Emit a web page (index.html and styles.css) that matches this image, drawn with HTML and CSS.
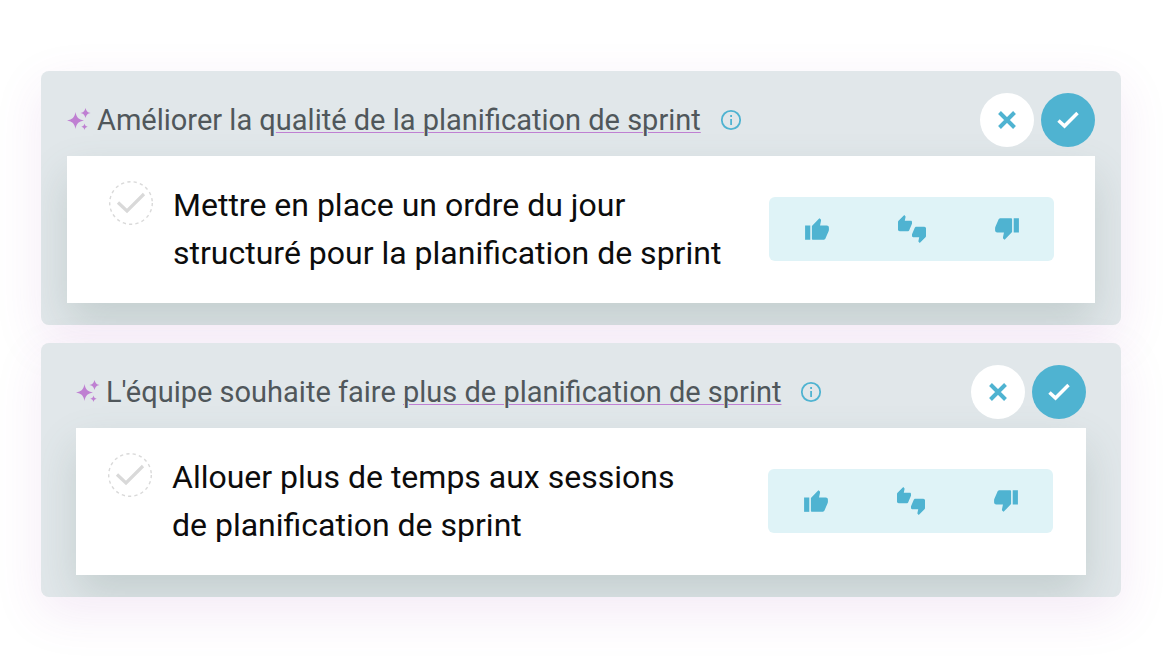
FILE: index.html
```html
<!DOCTYPE html>
<html lang="fr">
  <head>
    <meta charset="UTF-8">
    <meta name="viewport" content="width=device-width, initial-scale=1.0">
    <title>Planification de sprint</title>
    <link rel="stylesheet" href="styles.css">
  </head>
  <body>
    <!-- Shared icons -->
    <svg class="sprite" aria-hidden="true">
      <symbol id="sparkles" viewBox="0 0 24 24">
        <path d="M8.500 4c1 5.500 3 7.500 8.500 8.500-5.500 1-7.500 3-8.500 8.500-1-5.500-3-7.500-8.500-8.500C5.500 11.500 7.500 9.500 8.500 4z"/>
        <path d="M18.500 0c.8 3.200 2 4.400 5.200 5-3.200.6-4.400 1.800-5.200 5-.8-3.200-2-4.400-5.200-5 3.200-.6 4.400-1.800 5.200-5z"/>
        <path d="M17.500 15.500c.5 2.100 1.200 2.800 3.200 3.300-2 .5-2.700 1.200-3.200 3.200-.5-2-1.200-2.700-3.200-3.200 2-.5 2.700-1.200 3.200-3.300z"/>
      </symbol>
      <symbol id="info" viewBox="0 0 24 24">
        <circle cx="12" cy="12" r="9.200" fill="none" stroke="currentColor" stroke-width="1.800"/>
        <path d="M11.200 11h1.800v6h-1.800zM11.200 7h1.800v2h-1.800z"/>
      </symbol>
      <symbol id="cross" viewBox="0 0 24 24">
        <path d="M4.500 4.500l15 15M19.500 4.500l-15 15" fill="none" stroke="currentColor" stroke-width="4"/>
      </symbol>
      <symbol id="check" viewBox="0 0 24 24">
        <path d="M2.500 12.500l6 5.500L21.500 5" fill="none" stroke="currentColor" stroke-width="3.500"/>
      </symbol>
      <symbol id="tick" viewBox="0 0 44 44">
        <circle cx="22" cy="22" r="21.300" fill="none" stroke="currentColor" stroke-width="1.400" stroke-dasharray="3.200 3.200"/>
        <path d="M9 21.500l9 8.500L35 13" fill="none" stroke="currentColor" stroke-width="3.200"/>
      </symbol>
      <symbol id="thumb-up" viewBox="0 -1 24 24">
        <path d="M1 7.800h4.800V21H1z"/>
        <path d="M7.300 20V8.200L14.200 1l1.200 1.100c.3.400.4.800.3 1.200L14.800 7.800H21c1.200 0 2 .8 2 2v2c0 .5-.1.900-.3 1.300l-2.800 6.500c-.4.900-1 1.400-2 1.400H8.300c-.6 0-1-.4-1-1z"/>
      </symbol>
      <symbol id="thumbs" viewBox="0 0 24 24">
        <path d="M12 6c0-.55-.45-1-1-1H5.820l.66-3.180.02-.23c0-.31-.13-.59-.33-.8L5.380 0 .44 4.940C.17 5.210 0 5.590 0 6v6.500c0 .83.67 1.500 1.500 1.500h6.750c.62 0 1.150-.38 1.380-.91l2.260-5.290c.07-.17.11-.36.11-.55V6zm10.500 4h-6.750c-.62 0-1.150.38-1.380.91l-2.260 5.290c-.07.17-.11.36-.11.55V18c0 .55.45 1 1 1h5.180l-.66 3.180-.02.24c0 .31.13.59.33.8l.79.78 4.940-4.940c.27-.27.44-.65.44-1.060v-6.500c0-.83-.67-1.500-1.500-1.500z"/>
      </symbol>
    </svg>

    <main class="suggestions">
      <section class="card">
        <header class="card-header">
          <svg class="sparkles" aria-hidden="true"><use href="#sparkles"/></svg>
          <h2>Améliorer la q<span class="topic">ualité de la planification de sprint</span></h2>
          <button type="button" class="info" aria-label="Informations"><svg><use href="#info"/></svg></button>
          <div class="actions">
            <button type="button" class="round" aria-label="Refuser"><svg><use href="#cross"/></svg></button>
            <button type="button" class="round accept" aria-label="Accepter"><svg><use href="#check"/></svg></button>
          </div>
        </header>
        <div class="panel">
          <label class="task">
            <input type="checkbox">
            <svg class="tick" aria-hidden="true"><use href="#tick"/></svg>
            <span>Mettre en place un ordre du jour<br>structuré pour la planification de sprint</span>
          </label>
          <div class="rating">
            <button type="button" aria-label="Pour"><svg><use href="#thumb-up"/></svg></button>
            <button type="button" aria-label="Neutre"><svg class="both"><use href="#thumbs"/></svg></button>
            <button type="button" aria-label="Contre"><svg class="down"><use href="#thumb-up"/></svg></button>
          </div>
        </div>
      </section>

      <section class="card narrow">
        <header class="card-header">
          <svg class="sparkles" aria-hidden="true"><use href="#sparkles"/></svg>
          <h2>L'équipe souhaite faire <span class="topic">plus de planification de sprint</span></h2>
          <button type="button" class="info" aria-label="Informations"><svg><use href="#info"/></svg></button>
          <div class="actions">
            <button type="button" class="round" aria-label="Refuser"><svg><use href="#cross"/></svg></button>
            <button type="button" class="round accept" aria-label="Accepter"><svg><use href="#check"/></svg></button>
          </div>
        </header>
        <div class="panel">
          <label class="task">
            <input type="checkbox">
            <svg class="tick" aria-hidden="true"><use href="#tick"/></svg>
            <span>Allouer plus de temps aux sessions<br>de planification de sprint</span>
          </label>
          <div class="rating">
            <button type="button" aria-label="Pour"><svg><use href="#thumb-up"/></svg></button>
            <button type="button" aria-label="Neutre"><svg class="both"><use href="#thumbs"/></svg></button>
            <button type="button" aria-label="Contre"><svg class="down"><use href="#thumb-up"/></svg></button>
          </div>
        </div>
      </section>
    </main>
  </body>
</html>
```

FILE: styles.css
```css
:root {
  --blue: #4fb3d1;
  --purple: #bf80d2;
  --card-bg: #e1e7ea;
  --rating-bg: #dff3f7;
}

* {
  box-sizing: border-box;
}

body {
  margin: 0;
  font-family: Roboto, sans-serif;
  background: #fff;
  color: #0c0c0c;
}

.sprite {
  display: none;
}

svg {
  display: block;
  fill: currentColor;
}

button {
  display: flex;
  align-items: center;
  justify-content: center;
  padding: 0;
  border: none;
  background: none;
  color: var(--blue);
  cursor: pointer;
}

.suggestions {
  display: flex;
  flex-direction: column;
  gap: 18px;
  padding: 71px 42px 69px 41px;
}

.card {
  overflow: hidden;
  padding: 22px 26px;
  border-radius: 8px;
  background: var(--card-bg);
  box-shadow: 0 16px 50px rgba(150, 50, 170, 0.1);
}

.card-header {
  display: flex;
  align-items: center;
  margin-bottom: 9px;
}

.sparkles {
  width: 24px;
  height: 24px;
  margin-right: 6px;
  color: var(--purple);
}

h2 {
  margin: 0;
  font-size: 29px;
  font-weight: 400;
  line-height: 40px;
  color: #50575b;
}

.topic {
  text-decoration: underline 1px var(--purple);
  text-underline-offset: 2px;
}

.info {
  margin-left: 18px;
}

.info svg {
  width: 24px;
  height: 24px;
}

.actions {
  display: flex;
  gap: 7px;
  margin-left: auto;
}

.round {
  width: 54px;
  height: 54px;
  border-radius: 50%;
  background: #fff;
}

.round svg {
  width: 24px;
  height: 24px;
}

.accept {
  background: var(--blue);
  color: #fff;
}

.panel {
  display: flex;
  align-items: center;
  justify-content: space-between;
  padding: 25px 41px 26px 42px;
  background: #fff;
  box-shadow: 0 20px 40px rgba(80, 110, 100, 0.2);
}

.narrow {
  padding: 22px 35px;
}

.narrow .panel {
  padding: 25px 33px 26px 32px;
}

.task {
  display: flex;
  align-items: flex-start;
  font-size: 32px;
  line-height: 48px;
}

.task input {
  appearance: none;
  width: 0;
  height: 0;
  margin: 0;
}

.tick {
  flex: none;
  width: 44px;
  height: 44px;
  margin-right: 20px;
  color: #d9d9d9;
}

.rating {
  display: flex;
  flex: none;
  border-radius: 6px;
  background: var(--rating-bg);
}

.rating button {
  width: 95px;
  height: 64px;
}

.rating svg {
  width: 26px;
  height: 26px;
}

.rating .both {
  width: 28px;
  height: 28px;
}

.rating .down {
  transform: rotate(180deg);
}
```
